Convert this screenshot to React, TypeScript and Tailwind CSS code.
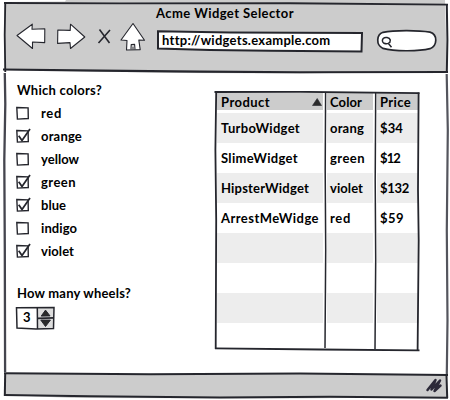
import { useLayoutEffect, useRef, useState } from "react";

const INK = "#25262d";

type LabelProps = { text: string; width: number; className?: string };

// Text whose letter spacing is tuned so that it fills the given width.
function Label({ text, width, className = "" }: LabelProps) {
  const ref = useRef<HTMLSpanElement>(null);
  const [spacing, setSpacing] = useState(0);
  useLayoutEffect(() => {
    if (ref.current) {
      const natural = ref.current.getBoundingClientRect().width - spacing * text.length;
      setSpacing((width - natural) / text.length);
    }
  }, [text, width]);
  return (
    <span ref={ref} className={`inline-block whitespace-pre ${className}`} style={{ letterSpacing: `${spacing}px` }}>
      {text}
    </span>
  );
}

function Frame() {
  return (
    <svg className="pointer-events-none absolute inset-0" width="450" height="400" viewBox="0 0 450 400" fill="none">
      <path d="M4 2 L65 1.5 L66 0 L445 0 L447 71 L300 73.5 L180 73 L4 70Z" fill="#cccccc" />
      <path d="M5 374 L447 374 L447 397 L300 398.5 L72 398 L5 395Z" fill="#cccccc" />
      <path d="M4 3 L120 3.4 L290 3.2 L448 4.6" stroke={INK} strokeWidth="1.9" />
      <path d="M5.3 2 L4.7 35 L5.3 72" stroke={INK} strokeWidth="1.8" />
      <path d="M446.8 4 L447.4 40 L446.8 73" stroke={INK} strokeWidth="2" />
      <path d="M3 69.5 L100 70.6 L200 71.6 L300 72.2 L448 72" stroke={INK} strokeWidth="2.1" />
      <path d="M4.8 73 L5.3 104 L4.3 160 L4.8 250 L5.1 372" stroke="#44454e" strokeWidth="2.3" />
      <path d="M446.7 74 L447.8 130 L446.8 230 L447.5 320 L446.8 374" stroke="#54555d" strokeWidth="2.2" />
      <path d="M4 373.2 L150 374.3 L300 373.4 L448 375" stroke={INK} strokeWidth="2" />
      <path d="M5.2 373 L4.8 396" stroke={INK} strokeWidth="2" />
      <path d="M446.5 375 L447.2 398" stroke={INK} strokeWidth="2" />
      <path d="M4 395 L90 396.2 L220 397.6 L330 396.7 L448 397.8" stroke={INK} strokeWidth="2" />
    </svg>
  );
}

function NavIcons() {
  return (
    <svg width="134" height="32" viewBox="16 21 134 32" fill="white" stroke={INK} strokeWidth="1.1" strokeLinejoin="round" className="shrink-0">
      <path d="M17 35.5 L32.3 24.2 L32 29.3 L44.8 28.7 L44.7 42.6 L32.5 42 L32.5 48.5Z" />
      <path d="M57.8 30 L70.2 30.4 L70.5 24.2 L84.8 37 L70.5 48.5 L70 42.6 L57.6 43.4Z" />
      <path d="M99.5 29.5 L109.5 43 M110 30 L98.5 43" fill="none" strokeWidth="1.6" />
      <path d="M121 40 L133 23.5 L144.5 40.2 L138.8 40 L140.2 49.6 L126.5 50 L127 40.5Z" />
      <path d="M131 49.3 L131.2 44.6 L134.6 44.4 L135 49.3 M133 46.5 V49" fill="none" />
    </svg>
  );
}

function Header() {
  return (
    <header className="relative flex h-[72px] flex-col">
      <div className="h-[21px] pl-[156px] pt-[4px] leading-[18px]">
        <Label text="Acme Widget Selector" width={138} />
      </div>
      <div className="flex h-8 pl-4">
        <NavIcons />
        <div className="relative ml-[7px] mt-[9px] h-[24px] w-[206px] pl-[5px] leading-[20px]">
          <svg className="absolute inset-0" width="206" height="24" viewBox="157 30 206 24">
            <path d="M158 31.2 L230 32.4 L362 33 L361.5 51.5 L270 50.8 L210 50 L158 48.5Z" fill="white" stroke={INK} strokeWidth="2" />
          </svg>
          <Label text="http://widgets.example.com" width={168} className="relative" />
        </div>
        <svg className="ml-[13px] mt-[7px]" width="62" height="25" viewBox="376 28 62 25">
          <path d="M383 32.3 C394 30 418 30 430 32.1 C438 34.5 437.4 46 430 48.7 C418 51.6 394 51.4 383 48.4 C375.5 45 376.5 34.5 383 32.3Z" fill="white" stroke={INK} strokeWidth="1.7" />
          <path d="M383.2 38.5 C385 36.8 389.5 37.3 390.3 40 C390.5 43.5 387 44.4 384 43.3 C382 42 382 40 383.2 38.5Z M388 43 L391.5 47.3" fill="none" stroke={INK} strokeWidth="1.5" />
        </svg>
      </div>
    </header>
  );
}

function Checkbox({ checked }: { checked: boolean }) {
  return (
    <svg width="18" height="18" viewBox="0 0.5 18 18" fill="none" stroke={INK} className="shrink-0">
      <path d="M1.8 4 L13.1 4.4 L13.3 15 L2.4 15.6Z" strokeWidth="1.4" />
      {checked && <path d="M3.7 9.3 L7 14 L15 2.6" strokeWidth="1.8" />}
    </svg>
  );
}

const colors = [
  { name: "red", width: 21, checked: false },
  { name: "orange", width: 41, checked: true },
  { name: "yellow", width: 38, checked: false },
  { name: "green", width: 35, checked: true },
  { name: "blue", width: 25, checked: true },
  { name: "indigo", width: 36, checked: false },
  { name: "violet", width: 33, checked: true },
];

function Options() {
  return (
    <section className="flex w-[198px] flex-col pl-[15px] pt-[9px]">
      <div className="h-[20px] pl-[2px] leading-[18px]">
        <Label text="Which colors?" width={85} />
      </div>
      {colors.map((c) => (
        <label key={c.name} className="flex h-[23px] items-center">
          <Checkbox checked={c.checked} />
          <Label text={c.name} width={c.width} className="ml-[8px] leading-[18px]" />
        </label>
      ))}
      <div className="mt-[22px] h-[21px] pl-[2px] leading-[18px]">
        <Label text="How many wheels?" width={114} />
      </div>
      <div className="relative h-[25px] w-[40px] pl-[8px] leading-[24px]">
        <svg className="absolute inset-0" width="40" height="25" viewBox="15 303.5 40 25" fill="none" stroke={INK}>
          <path d="M38 307 H53.5 V326.5 H38Z" fill="#dddddd" stroke="none" />
          <path d="M16.5 306.2 L54 306 L53.5 327 L36 327.5 L17 326.6Z M37.3 306 L37.5 327.5" strokeWidth="1.5" />
          <path d="M37.5 316.9 L54 316.4" strokeWidth="1.7" />
          <path d="M45.5 308.6 L50 314.4 L41.2 314.6Z M40.8 318.6 L50.4 318.6 L45.5 325Z" fill="#2a2a2a" strokeWidth="1" />
        </svg>
        <Label text="3" width={7} className="relative" />
      </div>
    </section>
  );
}

type Cell = [string, number];
const columns: { heading: Cell; cells: Cell[]; size: string; pad: string }[] = [
  {
    heading: ["Product", 49],
    cells: [["TurboWidget", 79], ["SlimeWidget", 77], ["HipsterWidget", 88], ["ArrestMeWidge", 98]],
    size: "w-[106px]",
    pad: "pl-[4px]",
  },
  {
    heading: ["Color", 32],
    cells: [["orang", 34], ["green", 35], ["violet", 33], ["red", 21]],
    size: "w-[46px]",
    pad: "pl-[3px]",
  },
  {
    heading: ["Price", 31],
    cells: [["$34", 23], ["$12", 20], ["$132", 29], ["$59", 24]],
    size: "w-[42px]",
    pad: "pl-[3px]",
  },
];
const rowIndexes = [0, 1, 2, 3, 4, 5, 6, 7];

function ProductTable() {
  return (
    <section className="relative ml-[16px] mt-[19px] h-[262px] w-[208px]">
      <div className="flex gap-[4px] pl-[3px] pt-[2px]">
        {columns.map((col) => (
          <div key={col.heading[0]} className={col.size}>
            <div className={`mb-[3px] h-[17px] bg-[#cccccc] leading-[19px] ${col.pad}`}>
              <Label text={col.heading[0]} width={col.heading[1]} />
            </div>
            {rowIndexes.map((i) => (
              <div key={i} className={`${i === 7 ? "h-[26px]" : "h-[30px]"} leading-[31px] odd:bg-white even:bg-[#ededed] ${col.pad}`}>
                {col.cells[i] && <Label text={col.cells[i][0]} width={col.cells[i][1]} />}
              </div>
            ))}
          </div>
        ))}
      </div>
      <svg className="pointer-events-none absolute inset-0" width="208" height="262" viewBox="214 91 208 262" fill="none" stroke={INK}>
        <path d="M214.5 92 L300 91.8 L419.5 93.2" strokeWidth="1.8" />
        <path d="M216.2 91.5 L215.4 150 L216.2 220 L215.7 349" strokeWidth="1.8" />
        <path d="M418.6 92.5 L418 190 L418.7 240 L417.6 351" strokeWidth="1.8" />
        <path d="M215 348.3 L320 349.5 L419.5 350.3" strokeWidth="1.8" />
        <path d="M325.6 93 L325.2 170 L325.7 250 L325 348" strokeWidth="1.5" />
        <path d="M375.7 93 L375.2 180 L375.7 260 L375 349" strokeWidth="1.5" />
        <path d="M317.2 98.5 L321.5 105.5 L312.5 105.5Z" fill="#2b2b2b" strokeWidth="0.6" />
      </svg>
    </section>
  );
}

function ResizeGrip() {
  return (
    <svg width="18" height="17" viewBox="425 377 18 17" fill="none" stroke="#2c2939" strokeWidth="2.5" strokeLinecap="round" strokeLinejoin="round">
      <path d="M427.5 390 L435.5 380 L431.5 389.5 L440 380.5 L434.5 391 L440.5 385.5" />
    </svg>
  );
}

export default function App() {
  return (
    <main className="relative flex h-[400px] w-[450px] flex-col overflow-hidden bg-white font-['Lato','Open_Sans',sans-serif] text-[13px] font-bold text-black">
      <Frame />
      <Header />
      <div className="relative flex h-[301px]">
        <Options />
        <ProductTable />
      </div>
      <footer className="relative flex h-[27px] justify-end pr-[7px] pt-[4px]">
        <ResizeGrip />
      </footer>
    </main>
  );
}
